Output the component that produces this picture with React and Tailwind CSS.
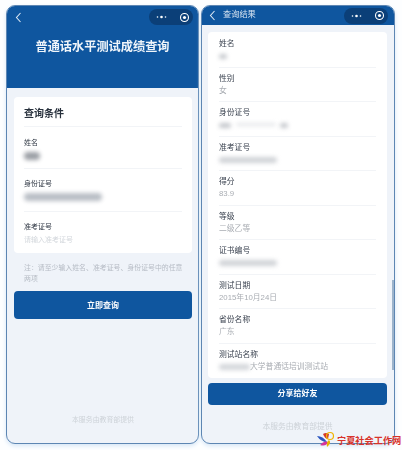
import React from 'react';

const font = { fontFamily: '"Liberation Sans", "Noto Sans CJK SC", sans-serif' };

const Capsule = () => (
  <div className="flex items-center w-[44px] h-[16px] rounded-full bg-[#0b3f78] pl-[6px] pr-[3px] justify-between">
    <svg width="12" height="4" viewBox="0 0 12 4" className="ml-[1px]">
      <circle cx="1.5" cy="2" r="0.8" fill="#fff" />
      <circle cx="5.5" cy="2" r="1.3" fill="#fff" />
      <circle cx="9.5" cy="2" r="0.8" fill="#fff" />
    </svg>
    <svg width="11" height="11" viewBox="0 0 11 11">
      <circle cx="5.5" cy="5.5" r="4" fill="none" stroke="#fff" strokeWidth="1.1" />
      <circle cx="5.5" cy="5.5" r="1.6" fill="#fff" />
    </svg>
  </div>
);

const Back = () => (
  <svg width="7" height="11" viewBox="0 0 7 11">
    <path d="M5.5 1L1.5 5.5L5.5 10" fill="none" stroke="#dbe7f3" strokeWidth="1.1" />
  </svg>
);

const Redacted = ({ className }) => (
  <div className={`rounded-sm blur-[2px] ${className}`} />
);

const QueryField = ({ label, children, className }) => (
  <div className={`flex flex-col ${className}`}>
    <div className="text-[7px] leading-[12px] text-[#2f3743]">{label}</div>
    <div className="h-[14px] flex items-center">{children}</div>
  </div>
);

const QueryPage = () => (
  <div className="w-[193px] h-[439px] shrink-0 rounded-[9px] border border-[#5d86b3] bg-[#eff3f9] flex flex-col overflow-hidden shadow-[0_2px_4px_#d6e6f6]">
    <div className="h-[82px] bg-[#0f569f] pl-[8px] pr-[5px] pt-[3px] shrink-0">
      <div className="flex items-center justify-between">
        <Back />
        <Capsule />
      </div>
      <div className="mt-[12px] -ml-[3px] text-center text-[12.2px] leading-[20px] font-bold text-[#f0f5fa] whitespace-nowrap">
        普通话水平测试成绩查询
      </div>
    </div>

    <div className="pl-[7px] pr-[6px] pt-[9px] flex flex-col flex-1">
      <div className="bg-white rounded-[4px] h-[156px] px-[10px]">
        <div className="h-[30px] pt-[9px] border-b border-[#f2f4f7] text-[10px] leading-[16px] font-bold text-[#27303c]">
          查询条件
        </div>
        <QueryField label="姓名" className="h-[42px] pt-[10px] border-b border-[#f2f4f7]">
          <Redacted className="w-[16px] h-[8px] bg-[#9b9fa5]" />
        </QueryField>
        <QueryField label="身份证号" className="h-[43px] pt-[9px] border-b border-[#f2f4f7]">
          <Redacted className="w-[78px] h-[8px] bg-[#b9bec5]" />
        </QueryField>
        <QueryField label="准考证号" className="h-[41px] pt-[9px]">
          <span className="text-[7px] text-[#d3d7dc]">请输入准考证号</span>
        </QueryField>
      </div>

      <div className="mt-[9px] pl-[10px] pr-[8px] text-[6.9px] leading-[11px] text-[#b6bcc5]">
        注：请至少输入姓名、准考证号、身份证号中的任意两项
      </div>

      <div className="mt-[7px] h-[28px] pt-[1px] rounded-[4px] bg-[#0f569f] flex items-center justify-center text-[8px] font-bold text-white">
        立即查询
      </div>

      <div className="mt-[96px] text-center text-[6.9px] text-[#cdd2d8]">本服务由教育部提供</div>
    </div>
  </div>
);

const ResultField = ({ label, children, last }) => (
  <div className={`h-[34.5px] pt-[5px] ${last ? '' : 'border-b border-[#f2f4f7]'}`}>
    <div className="text-[7.8px] leading-[12px] text-[#3b4350]">{label}</div>
    <div className="h-[12px] flex items-center text-[7.8px] text-[#a9adb3] whitespace-nowrap">{children}</div>
  </div>
);

const ResultPage = () => (
  <div className="relative w-[194px] h-[439px] shrink-0 rounded-[9px] border border-[#5d86b3] bg-[#eff3f9] flex flex-col overflow-hidden shadow-[0_2px_4px_#d6e6f6]">
    <div className="h-[19px] bg-[#0f569f] pl-[7px] pr-[6px] flex items-center shrink-0">
      <Back />
      <span className="ml-[7px] text-[8.2px] text-[#d9e5f1]">查询结果</span>
      <div className="ml-auto">
        <Capsule />
      </div>
    </div>

    <div className="pl-[6px] pr-[7px] pt-[7px] flex flex-col flex-1">
      <div className="bg-white rounded-[4px] h-[346px] px-[11px] pt-[1px]">
        <ResultField label="姓名"><Redacted className="w-[8px] h-[5px] bg-[#c4c7cc]" /></ResultField>
        <ResultField label="性别">女</ResultField>
        <ResultField label="身份证号">
          <div className="flex w-[69px] justify-between">
            <Redacted className="w-[12px] h-[5px] bg-[#c4c7cc]" />
            <Redacted className="w-[40px] h-[3px] bg-[#e4e6e9]" />
            <Redacted className="w-[8px] h-[5px] bg-[#c4c7cc]" />
          </div>
        </ResultField>
        <ResultField label="准考证号"><Redacted className="w-[58px] h-[6px] bg-[#d0d3d7]" /></ResultField>
        <ResultField label="得分">83.9</ResultField>
        <ResultField label="等级">二级乙等</ResultField>
        <ResultField label="证书编号"><Redacted className="w-[58px] h-[6px] bg-[#d0d3d7]" /></ResultField>
        <ResultField label="测试日期">2015年10月24日</ResultField>
        <ResultField label="省份名称">广东</ResultField>
        <ResultField label="测试站名称" last>
          <Redacted className="w-[31px] h-[6px] bg-[#d3d6da]" />
          <span>大学普通话培训测试站</span>
        </ResultField>
      </div>

      <div className="mt-[5px] h-[22px] rounded-[4px] bg-[#0f569f] flex items-center justify-center text-[8px] font-bold text-white">
        分享给好友
      </div>

      <div className="mt-[16px] text-center text-[7.8px] text-[#cdd2d8]">本服务由教育部提供</div>
    </div>

    <div className="absolute right-0 top-[274px] w-[2px] h-[90px] bg-[#9db4cc]" />
  </div>
);

// site watermark in the bottom right corner
const Watermark = () => (
  <div className="absolute left-[316px] top-[431px] flex items-center">
    <svg width="19" height="17" viewBox="0 0 19 17">
      <path d="M1 5 Q7 5 11 11 Q5 11 1 5Z" fill="#2a55c0" />
      <path d="M4 14 Q8 9 12 11 Q10 16 4 14Z" fill="#d6339a" />
      <path d="M11 16 Q10 11 13 9 Q16 12 11 16Z" fill="#e8b100" />
      <path d="M7 3 Q10 1 13 3 L12 8 Q9 8 7 3Z" fill="#d43a2a" />
      <circle cx="14" cy="5" r="3.5" fill="none" stroke="#f0b400" strokeWidth="1.2" />
    </svg>
    <span
      className="ml-[2px] text-[9.2px] leading-[14px] font-bold text-[#d8322a] whitespace-nowrap"
      style={{ fontFamily: '"Noto Sans CJK SC", serif' }}
    >
      宁夏社会工作网
    </span>
  </div>
);

const App = () => {
  return (
    <div className="relative w-[402px] h-[450px] bg-[#fdfeff] overflow-hidden" style={font}>
      <div className="flex gap-[2px] pl-[6px] pt-[5px] blur-[0.4px]">
        <QueryPage />
        <ResultPage />
      </div>
      <Watermark />
    </div>
  );
};

export default App;
